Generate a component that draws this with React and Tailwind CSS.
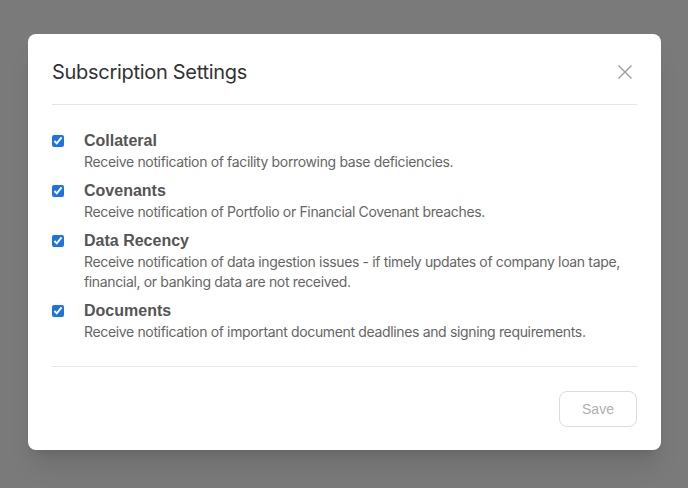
import { useState } from 'react';

const items = [
    {
        id: 'collateral',
        title: 'Collateral',
        desc: 'Receive notification of facility borrowing base deficiencies.',
    },
    {
        id: 'covenants',
        title: 'Covenants',
        desc: 'Receive notification of Portfolio or Financial Covenant breaches.',
    },
    {
        id: 'recency',
        title: 'Data Recency',
        desc: 'Receive notification of data ingestion issues - if timely updates of company loan tape, financial, or banking data are not received.',
    },
    {
        id: 'documents',
        title: 'Documents',
        desc: 'Receive notification of important document deadlines and signing requirements.',
    },
];

const App = () => {
    const [checked, setChecked] = useState({
        collateral: true,
        covenants: true,
        recency: true,
        documents: true,
    });

    const toggle = (id) => setChecked(prev => ({ ...prev, [id]: !prev[id] }));

    return (
        <div className="min-h-screen w-full bg-[#7a7a7a] pt-[34px] pl-[28px] font-['Inter',sans-serif]">
            <div className="w-[633px] h-[416px] bg-white rounded-lg shadow-xl flex flex-col px-6">
                {/* header */}
                <div className="flex items-center justify-between pt-6 pb-[18px] border-b border-[#e6e6e6]">
                    <h2 className="text-[20px] leading-7 text-[#333] tracking-[-0.3px]">
                        Subscription Settings
                    </h2>
                    <button className="text-[#999] mr-[4px]">
                        <svg width="16" height="16" viewBox="0 0 16 16" fill="none" stroke="currentColor" strokeWidth="1.3">
                            <path d="M1.5 1.5L14.5 14.5M14.5 1.5L1.5 14.5" />
                        </svg>
                    </button>
                </div>

                {/* options */}
                <div className="flex flex-col gap-2 pt-[25px] pb-6 border-b border-[#e6e6e6]">
                    {items.map(item => (
                        <label key={item.id} className="flex items-start gap-5 cursor-pointer">
                            <input
                                type="checkbox"
                                checked={checked[item.id]}
                                onChange={() => toggle(item.id)}
                                className="mt-[5px] w-3 h-3 accent-[#1a73e8] shrink-0"
                            />
                            <div className="flex flex-col">
                                <span className="text-[16px] leading-[22px] font-bold text-[#555] font-['Liberation_Sans',sans-serif]">
                                    {item.title}
                                </span>
                                <span className="text-[14px] leading-5 text-[#666] tracking-[-0.35px]">
                                    {item.desc}
                                </span>
                            </div>
                        </label>
                    ))}
                </div>

                {/* footer */}
                <div className="flex justify-end pt-6">
                    <button
                        disabled
                        className="w-[78px] h-9 rounded-lg border border-[#dcdcdc] text-[14px] text-[#b0b0b0] font-['Liberation_Sans',sans-serif]"
                    >
                        Save
                    </button>
                </div>
            </div>
        </div>
    );
};

export default App;
